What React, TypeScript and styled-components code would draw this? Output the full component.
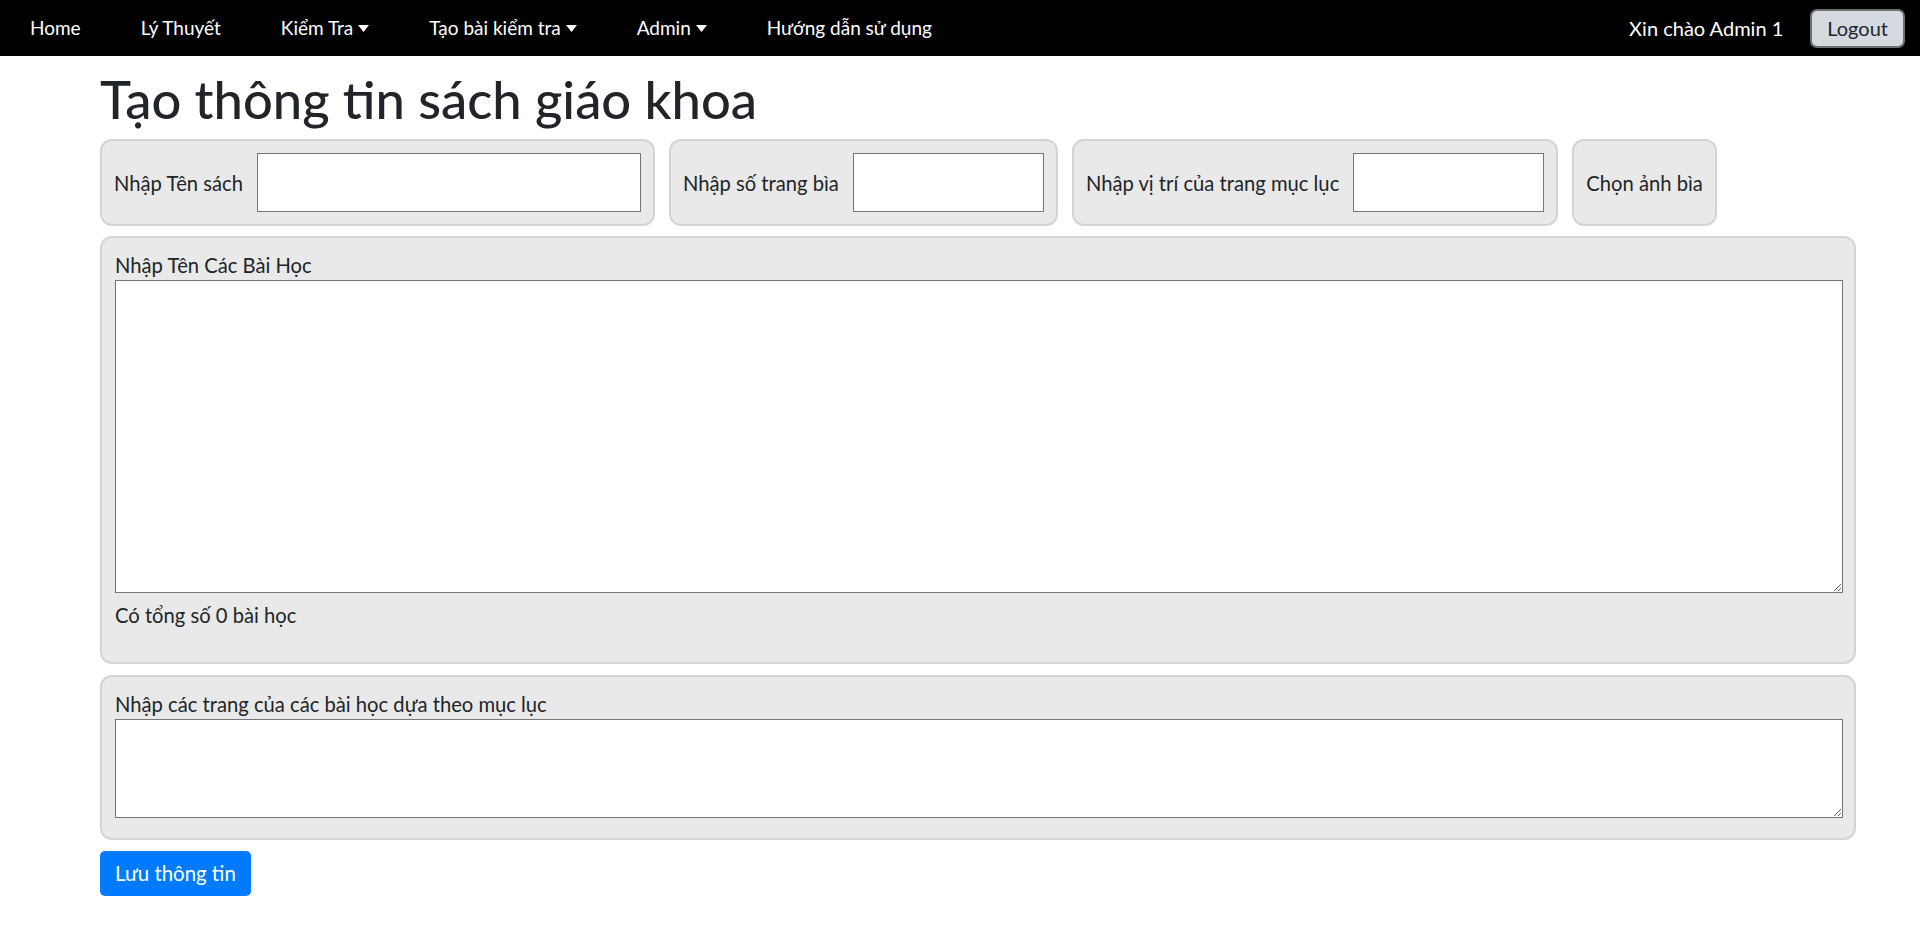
import styled, {createGlobalStyle} from "styled-components";

const GlobalStyle = createGlobalStyle`
    * {
        box-sizing: border-box;
    }
    body {
        margin: 0;
        background: #fff;
        color: #212529;
        font-family: Lato, "Noto Sans", sans-serif;
        font-size: 20.2px;
        line-height: 1.5;
    }
`;

const NavBar = styled.nav`
    height: 56px;
    background: #000;
    display: flex;
    align-items: center;
    justify-content: space-between;
    padding: 0 15px 0 0;
`;

const NavList = styled.ul`
    display: flex;
    align-items: center;
    list-style: none;
    margin: 0;
    padding: 0;
`;

const NavItem = styled.li`
    display: flex;
    align-items: center;
    gap: 5px;
    padding: 0 30px;
    color: #fff;
    font-size: 19px;
    cursor: pointer;
`;

const UserBox = styled.div`
    display: flex;
    align-items: center;
    gap: 27px;
    color: #fff;
    font-size: 20px;
`;

const LogoutButton = styled.button`
    height: 39px;
    padding: 0 15px;
    font: inherit;
    font-size: 20px;
    color: #212529;
    background: #d5dae0;
    border: 2px solid #6f6f6f;
    border-radius: 7px;
`;

const Main = styled.main`
    padding: 0 64px 40px 100px;
`;

const Title = styled.h1`
    margin: 13px 0 10px;
    font-size: 52.5px;
    font-weight: 500;
    line-height: 60px;
    color: #212529;
`;

const FieldRow = styled.div`
    display: flex;
    gap: 14px;
    margin-bottom: 10px;
`;

const Panel = styled.div`
    background: #e9e9e9;
    border: 2px solid #d6d3d3;
    border-radius: 12px;
`;

const InlinePanel = styled(Panel)`
    display: flex;
    align-items: center;
    padding: 12px 12px 12px;
`;

const BlockPanel = styled(Panel)<{ $gap: number }>`
    padding: 12px 11px 13px 13px;
    margin-bottom: ${p => p.$gap}px;
`;

const Label = styled.label<{ $last?: boolean }>`
    display: block;
    margin-right: ${p => (p.$last ? 0 : 14)}px;
    white-space: nowrap;
    line-height: 30px;
`;

const TextInput = styled.input<{ $w: number }>`
    width: ${p => p.$w}px;
    height: 59px;
    border: 1px solid #767676;
    background: #fff;
    font: inherit;
`;

const BlockLabel = styled.label`
    display: block;
    line-height: 30px;
`;

const Area = styled.textarea<{ $h: number }>`
    display: block;
    width: 100%;
    height: ${p => p.$h}px;
    border: 1px solid #767676;
    background: #fff;
    font: inherit;
    margin-bottom: 7px;
`;

const Count = styled.p`
    margin: 0 0 19px;
    line-height: 30px;
`;

const SaveButton = styled.button`
    padding: 7px 15px 8px;
    font: inherit;
    font-size: 20.4px;
    line-height: 30px;
    color: #fff;
    background: #007bff;
    border: none;
    border-radius: 5px;
`;

const Caret = () => (
    <svg width="11" height="7" viewBox="0 0 11 7">
        <path d="M0 0h11L5.5 7z" fill="#fff"/>
    </svg>
);

const navItems = [
    {label: "Home", caret: false},
    {label: "Lý Thuyết", caret: false},
    {label: "Kiểm Tra", caret: true},
    {label: "Tạo bài kiểm tra", caret: true},
    {label: "Admin", caret: true},
    {label: "Hướng dẫn sử dụng", caret: false},
];

function App() {
    return (
        <>
            <GlobalStyle/>
            <NavBar>
                <NavList>
                    {navItems.map(item => (
                        <NavItem key={item.label}>
                            {item.label}
                            {item.caret && <Caret/>}
                        </NavItem>
                    ))}
                </NavList>
                <UserBox>
                    <span>Xin chào Admin 1</span>
                    <LogoutButton>Logout</LogoutButton>
                </UserBox>
            </NavBar>
            <Main>
                <Title>Tạo thông tin sách giáo khoa</Title>
                <FieldRow>
                    <InlinePanel>
                        <Label>Nhập Tên sách</Label>
                        <TextInput $w={384}/>
                    </InlinePanel>
                    <InlinePanel>
                        <Label>Nhập số trang bìa</Label>
                        <TextInput $w={191}/>
                    </InlinePanel>
                    <InlinePanel>
                        <Label>Nhập vị trí của trang mục lục</Label>
                        <TextInput $w={191}/>
                    </InlinePanel>
                    <InlinePanel>
                        <Label $last>Chọn ảnh bìa</Label>
                    </InlinePanel>
                </FieldRow>
                <BlockPanel $gap={11}>
                    <BlockLabel>Nhập Tên Các Bài Học</BlockLabel>
                    <Area $h={313}/>
                    <Count>Có tổng số 0 bài học</Count>
                </BlockPanel>
                <BlockPanel $gap={11}>
                    <BlockLabel>Nhập các trang của các bài học dựa theo mục lục</BlockLabel>
                    <Area $h={99}/>
                </BlockPanel>
                <SaveButton>Lưu thông tin</SaveButton>
            </Main>
        </>
    );
}

export default App;
